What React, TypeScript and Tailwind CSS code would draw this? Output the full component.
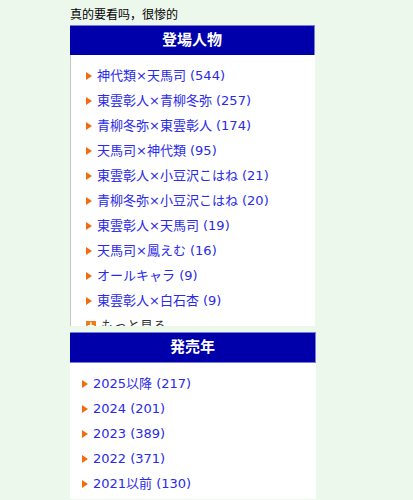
const characters = [
  "神代類×天馬司 (544)",
  "東雲彰人×青柳冬弥 (257)",
  "青柳冬弥×東雲彰人 (174)",
  "天馬司×神代類 (95)",
  "東雲彰人×小豆沢こはね (21)",
  "青柳冬弥×小豆沢こはね (20)",
  "東雲彰人×天馬司 (19)",
  "天馬司×鳳えむ (16)",
  "オールキャラ (9)",
  "東雲彰人×白石杏 (9)",
];

const years = ["2025以降 (217)", "2024 (201)", "2023 (389)", "2022 (371)", "2021以前 (130)"];

function Arrow() {
  return (
    <svg width="6" height="8" viewBox="0 0 6 8" className="shrink-0">
      <path d="M0 0 L6 4 L0 8 Z" fill="#f26c0d" />
    </svg>
  );
}

function Row({ label }: { label: string }) {
  return (
    <li className="flex items-center gap-[5px] h-[25px]">
      <Arrow />
      <a className="text-[13px] text-[#2a2ae8] whitespace-nowrap">{label}</a>
    </li>
  );
}

function Header({ title }: { title: string }) {
  return (
    <div className="h-[30px] flex items-center justify-center bg-[#0000aa] border-t border-r border-[#7d7dd8] text-white font-bold text-[15px]">
      {title}
    </div>
  );
}

export default function App() {
  return (
    <div
      className="min-h-screen bg-[#edf8ed] pl-[70px] pt-[6px]"
      style={{ fontFamily: '"DejaVu Sans", "Noto Sans CJK JP", sans-serif' }}
    >
      <p className="text-[12px] text-black leading-[19px]">真的要看吗，很惨的</p>

      <section className="w-[245px]">
        <Header title="登場人物" />
        <div className="h-[271px] overflow-hidden bg-white border-l border-[#c8c8c8] pl-[15px] pt-[8px]">
          <ul>
            {characters.map((c) => (
              <Row key={c} label={c} />
            ))}
          </ul>
          <div className="flex items-center gap-[5px] h-[25px]">
            <span className="w-[10px] h-[10px] bg-[#f07a1a] flex items-center justify-center text-white text-[10px] leading-none font-bold">
              +
            </span>
            <span className="text-[13px] text-[#333]">もっと見る</span>
          </div>
        </div>
      </section>

      <section className="w-[246px] mt-[6px]">
        <div className="border-b border-[#7d7dd8]">
          <Header title="発売年" />
        </div>
        <div className="h-[136px] bg-white pl-[12px] pt-[8px]">
          <ul>
            {years.map((y) => (
              <Row key={y} label={y} />
            ))}
          </ul>
        </div>
      </section>
    </div>
  );
}
